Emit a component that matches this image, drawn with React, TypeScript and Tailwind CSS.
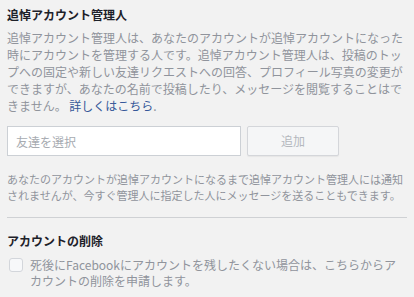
import React from "react";

const font = { fontFamily: '"Noto Sans CJK JP", "Noto Sans", sans-serif' };

export default function App() {
  return (
    <div
      className="w-[414px] h-[297px] bg-[#f2f2f2] px-[7px] pt-[7px] overflow-hidden"
      style={font}
    >
      <h2 className="text-[12px] leading-[16px] font-bold text-[#1d2129]">
        追悼アカウント管理人
      </h2>
      <p className="mt-[6px] text-[12px] leading-[17px] text-[#90949c] whitespace-nowrap">
        追悼アカウント管理人は、あなたのアカウントが追悼アカウントになった
        <br />
        時にアカウントを管理する人です。追悼アカウント管理人は、投稿のトッ
        <br />
        プへの固定や新しい友達リクエストへの回答、プロフィール写真の変更が
        <br />
        できますが、あなたの名前で投稿したり、メッセージを閲覧することはで
        <br />
        きません。 <a className="text-[#365899]">詳しくはこちら</a>.
      </p>

      <div className="mt-[12px] flex gap-[6px]">
        <input
          className="w-[234px] h-[30px] bg-white border border-[#ccd0d5] px-[8px] text-[12px] text-[#1d2129] placeholder:text-[#a7abb1] outline-none"
          placeholder="友達を選択"
          style={font}
        />
        <button
          className="w-[92px] h-[30px] rounded-[2px] border border-[#d4d6da] bg-[#f5f6f7] text-[12px] text-[#b4b8be] shadow-[0_1px_1px_rgba(0,0,0,0.05)]"
          style={font}
        >
          追加
        </button>
      </div>

      <p className="mt-[15px] text-[11px] leading-[16px] text-[#90949c] whitespace-nowrap">
        あなたのアカウントが追悼アカウントになるまで追悼アカウント管理人には通知
        <br />
        されませんが、今すぐ管理人に指定した人にメッセージを送ることもできます。
      </p>

      <div className="mt-[14px] h-px bg-[#cfd1d4]" />

      <h2 className="mt-[15px] text-[12px] leading-[16px] font-bold text-[#1d2129]">
        アカウントの削除
      </h2>
      <div className="mt-[8px] flex items-start">
        <span className="ml-[2px] mt-[1px] w-[14px] h-[14px] shrink-0 rounded-[3px] border border-[#d3d6db] bg-[#f7f8fa]" />
        <p className="ml-[7px] text-[12px] leading-[16px] text-[#90949c]">
          死後にFacebookにアカウントを残したくない場合は、こちらからア
          <br />
          カウントの削除を申請します。
        </p>
      </div>
    </div>
  );
}
